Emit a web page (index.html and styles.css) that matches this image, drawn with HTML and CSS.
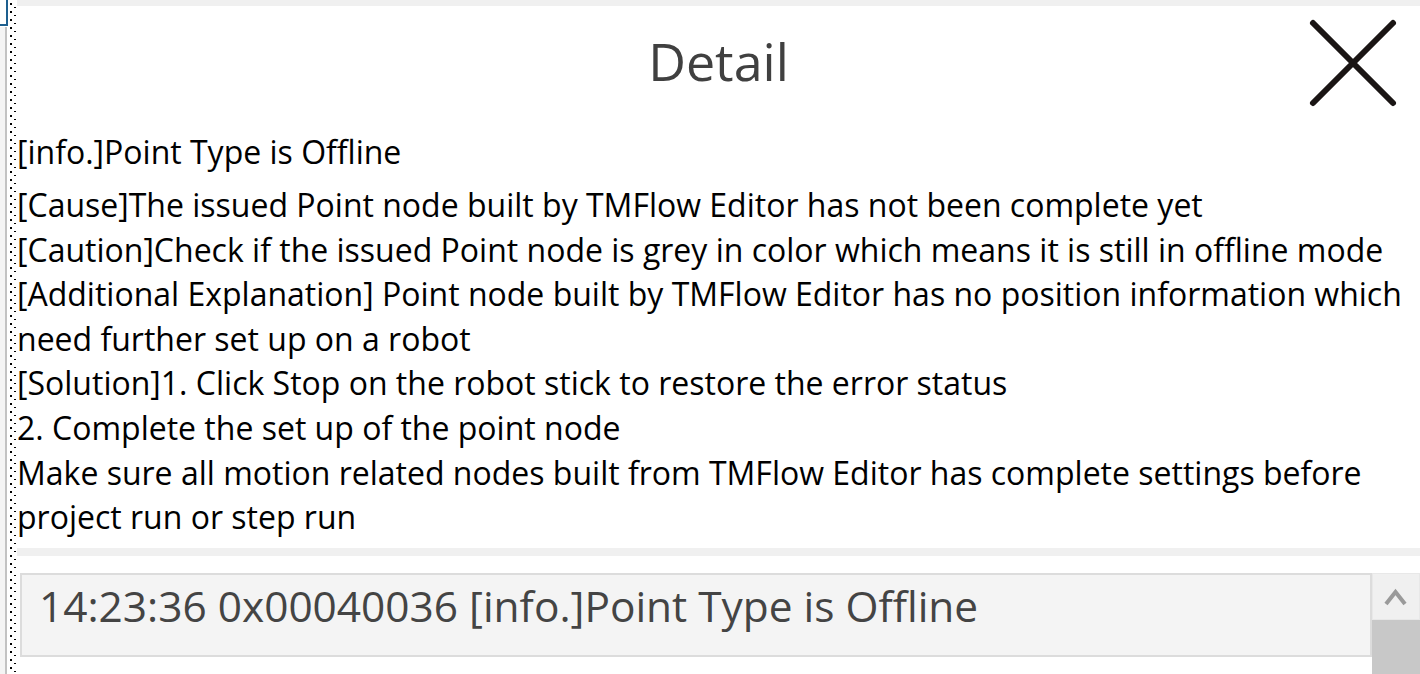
FILE: index.html
```html
<!DOCTYPE html>
<html lang="en">
<head>
<meta charset="utf-8">
<title>Detail</title>
<link rel="stylesheet" href="styles.css">
</head>
<body>
<div class="app">
  <div class="rail">
    <div class="rail-edge">
      <div class="rail-corner"></div>
      <div class="rail-track"></div>
    </div>
    <svg class="focus-dots" width="8" height="674" aria-hidden="true">
      <defs>
        <pattern id="dots" width="8" height="8" patternUnits="userSpaceOnUse">
          <rect x="1" y="3" width="2" height="2" fill="#000"/>
          <rect x="5" y="7" width="2" height="2" fill="#000"/>
        </pattern>
      </defs>
      <rect width="8" height="674" fill="url(#dots)"/>
    </svg>
  </div>
  <div class="panel">
    <header class="head">
      <span></span>
      <h1 class="title">Detail</h1>
      <button class="close" aria-label="Close">
        <svg width="90" height="90" viewBox="0 0 90 90">
          <path d="M5 5 L85 85 M85 5 L5 85" stroke="#1a1514" stroke-width="6" stroke-linecap="round" fill="none"/>
        </svg>
      </button>
    </header>
    <div class="detail">
      <p class="msg msg-head">[info.]Point Type is Offline</p>
      <p class="msg">[Cause]The issued Point node built by TMFlow Editor has not been complete yet<br>[Caution]Check if the issued Point node is grey in color which means it is still in offline mode<br>[Additional Explanation] Point node built by TMFlow Editor has no position information which need further set up on a robot<br>[Solution]1. Click Stop on the robot stick to restore the error status<br>2. Complete the set up of the point node<br>Make sure all motion related nodes built from TMFlow Editor has complete settings before project run or step run</p>
    </div>
    <div class="sep"></div>
    <div class="log">
      <div class="log-list">
        <div class="log-item">14:23:36 0x00040036 [info.]Point Type is Offline</div>
      </div>
      <div class="scroll">
        <div class="scroll-up">
          <svg width="48" height="47" viewBox="0 0 48 47">
            <polyline points="14,31 23.5,19 33,31" stroke="#9a9a9a" stroke-width="4" fill="none"/>
          </svg>
        </div>
        <div class="scroll-thumb"></div>
      </div>
    </div>
  </div>
</div>
</body>
</html>
```

FILE: styles.css
```css
html, body {
  margin: 0;
  padding: 0;
  height: 674px;
  overflow: hidden;
  background: #ffffff;
}

.app {
  display: flex;
  height: 674px;
  font-family: "Open Sans", "Noto Sans", sans-serif;
}

.rail {
  display: flex;
  width: 17px;
  flex: none;
  background: #ffffff;
}

.rail-edge {
  width: 8px;
  display: flex;
  flex-direction: column;
}

.rail-corner {
  height: 24px;
  width: 6px;
  border-right: 2px solid #1d5f8f;
  border-bottom: 2px solid #1d5f8f;
  background: #ffffff;
}

.rail-track {
  flex: 1;
  margin-top: 1px;
  width: 5px;
  background: #f4f4f4;
  border-right: 2px solid #c2c2c2;
}

.focus-dots {
  display: block;
  margin-left: 1px;
}

.panel {
  flex: 1;
  display: flex;
  flex-direction: column;
  border-top: 6px solid #f0f0f0;
  min-width: 0;
}

.head {
  height: 124px;
  display: grid;
  grid-template-columns: 1fr auto 1fr;
  align-items: start;
}

.title {
  margin: 29px 0 0;
  font-size: 52px;
  line-height: 1;
  font-weight: 400;
  color: #404040;
}

.close {
  justify-self: end;
  margin: 12px 22px 0 0;
  padding: 0;
  border: 0;
  background: none;
  width: 90px;
  height: 90px;
}

.close svg {
  display: block;
}

.detail {
  padding-left: 0;
}

.msg {
  margin: 0;
  font-size: 32px;
  line-height: 44.6px;
  color: #000000;
}

.msg-head {
  margin-bottom: 8.4px;
}

.sep {
  margin-top: 8px;
  height: 8px;
  background: #f0f0f0;
  flex: none;
}

.log {
  margin-top: 17px;
  flex: 1;
  display: flex;
  min-height: 0;
}

.log-list {
  flex: 1;
  padding-left: 3px;
}

.log-item {
  box-sizing: border-box;
  height: 84px;
  border: 2px solid #dcdcdc;
  background: #f4f4f4;
  padding: 4px 0 0 17px;
  font-size: 42.4px;
  line-height: 54px;
  color: #444444;
  white-space: nowrap;
}

.scroll {
  width: 48px;
  flex: none;
  display: flex;
  flex-direction: column;
}

.scroll-up {
  box-sizing: border-box;
  height: 47px;
  background: #f0f0f0;
  border: 1px solid #e8e8e8;
}

.scroll-up svg {
  display: block;
  margin: -1px;
}

.scroll-thumb {
  flex: 1;
  background: #c8c8c8;
}
```
